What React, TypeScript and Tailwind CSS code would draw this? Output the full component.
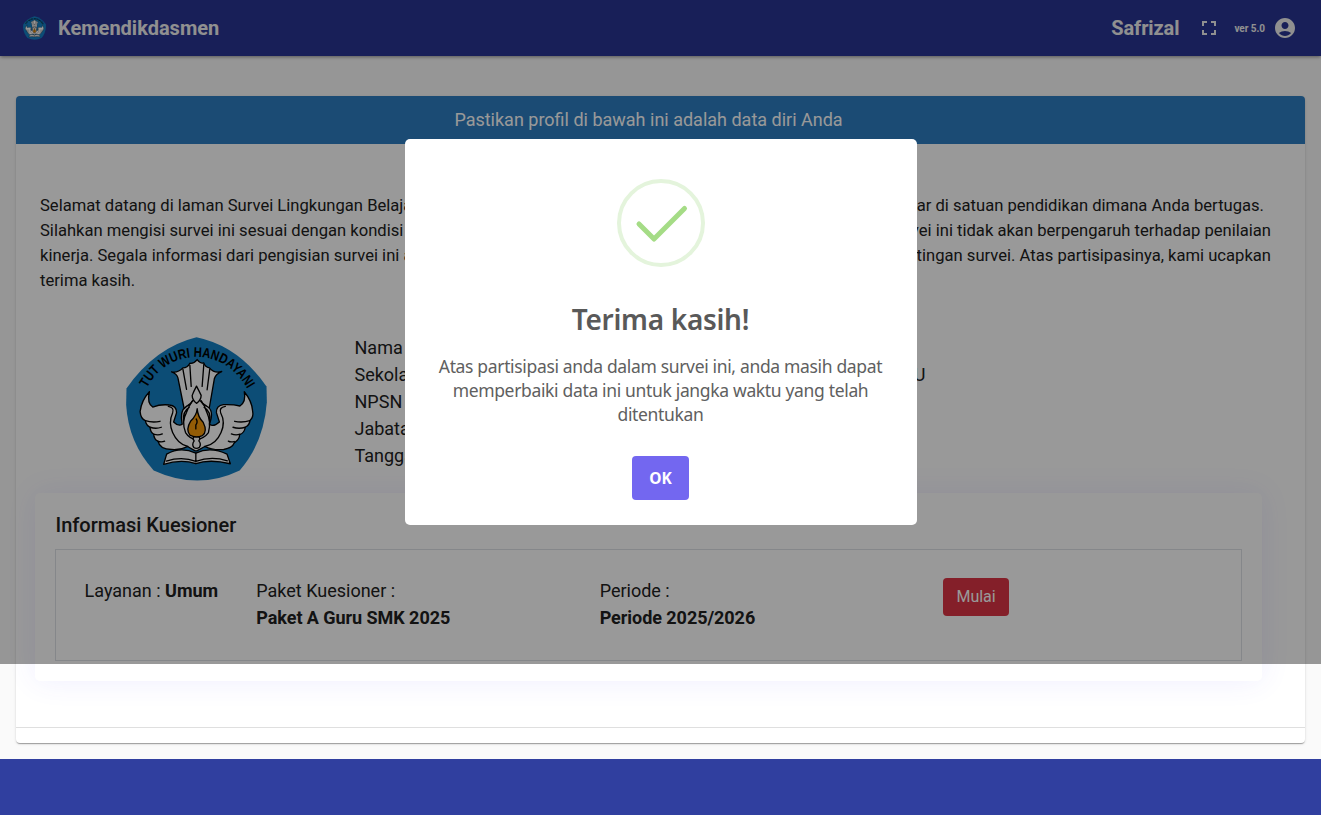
import React from "react";
import { MdAccountCircle, MdFullscreen } from "react-icons/md";

const ink = { stroke: "#000", strokeWidth: 4, strokeLinejoin: "round", strokeLinecap: "round" } as const;

function Emblem({ className, arcId }: { className: string; arcId: string }) {
  return (
    <svg className={className} viewBox="46 35 426 434" aria-hidden="true">
      <path
        d="M259 36 Q385 62 470 184 L471 232 Q462 354 389 437 Q263 498 130 437 Q54 354 47 240 L48 190 Q135 66 259 36Z"
        fill="#1580c5"
      />
      <path id={arcId} d="M109 189 Q160 98 259 95 Q362 98 416 198" fill="none" />
      <text fontFamily="Liberation Sans, Arial, sans-serif" fontSize="42" fontWeight="700" fill="#000">
        <textPath href={`#${arcId}`} textLength="376" lengthAdjust="spacingAndGlyphs">
          TUT WURI HANDAYANI
        </textPath>
      </text>
      <g fill="#fff" {...ink}>
        <path d="M222 252 L203 158 Q200 146 184 140 Q203 144 218 128 Q232 128 239 114 Q251 116 261 103 Q271 116 281 113 Q285 126 298 128 Q313 146 335 139 Q317 146 313 160 L297 252 Q276 228 259 235 Q242 228 222 252Z" />
        <path d="M218 132 L229 193 M239 120 L243 184 M281 118 L276 184 M299 132 L291 194" fill="none" />
        <path d="M117 200 Q93 226 89 260 Q91 282 105 287 Q107 301 119 307 Q120 322 130 328 Q131 344 143 349 Q148 374 184 374 Q211 376 232 365 L255 378 L260 378 L284 365 Q308 377 341 374 Q367 370 373 354 Q389 344 389 329 Q403 325 406 307 Q419 300 420 287 Q432 277 428 257 Q426 228 403 200 Q409 231 390 243 Q371 238 340 239 Q318 242 319 263 L328 291 Q309 308 298 297 Q314 256 289 243 Q277 238 272 229 Q260 216 246 229 Q241 239 229 244 Q207 257 216 298 Q205 306 190 291 L199 263 Q199 242 177 240 Q151 237 127 246 Q109 235 117 200Z" />
        <path d="M105 287 Q126 294 149 289 M119 307 Q137 313 153 307 M130 328 Q144 332 156 327 M143 350 Q155 353 163 349 M420 287 Q397 294 374 289 M406 307 Q387 313 369 307 M390 328 Q377 332 364 327 M373 350 Q362 353 355 349 M174 244 Q193 247 187 264 Q174 292 187 323 Q203 359 233 365 M346 244 Q326 247 332 264 Q347 292 333 323 Q318 359 284 365" fill="none" />
        <path d="M259 183 Q268 200 273 211 Q273 224 259 235 Q246 224 246 211 Q250 200 259 183Z" />
        <path d="M247 227 Q235 245 229 262 Q213 290 226 323 Q237 341 259 344 Q282 341 295 323 Q304 292 290 262 Q284 242 273 227 M237 247 Q216 259 220 292 M282 247 Q304 259 299 292" fill="none" />
        <path d="M169 388 Q211 364 257 385 Q301 364 351 388 L361 417 Q298 402 257 417 Q213 402 160 419Z" />
        <path d="M257 385 V411 M168 409 Q216 394 257 410 Q303 393 352 408" fill="none" />
        <path d="M251 336 Q246 341 252 348 Q244 359 251 368 Q259 374 268 367 Q274 357 266 348 Q272 340 266 336Z" />
      </g>
      <path d="M261 251 Q263 276 279 292 Q293 320 277 332 Q257 340 239 331 Q226 313 241 289 Q260 270 261 251Z" fill="#f59a0a" {...ink} />
      <path d="M258 282 Q264 292 257 300 V312" fill="none" {...ink} />
    </svg>
  );
}

const profile: [string, string][] = [
  ["Nama", ""],
  ["Sekolah", "U"],
  ["NPSN", ""],
  ["Jabatan", ""],
  ["Tanggal", ""],
];

function Header() {
  return (
    <header className="relative flex h-14 items-center justify-between bg-[#283593] pr-6 pl-[23px] text-[#f0f0f0] shadow-[0_2px_4px_-1px_rgba(0,0,0,0.2),0_1px_3px_rgba(0,0,0,0.24)]">
      <div className="flex items-center">
        <Emblem className="h-6 w-[23px]" arcId="arc-small" />
        <span className="ml-3 text-[20px] font-bold">Kemendikdasmen</span>
      </div>
      <div className="flex items-center">
        <span className="text-[20px] font-bold tracking-[-0.1px]">Safrizal</span>
        <MdFullscreen className="ml-[18px] size-6" />
        <span className="ml-[13px] text-[10px] font-bold tracking-[-0.05px]">ver 5.0</span>
        <MdAccountCircle className="ml-2 size-6" />
      </div>
    </header>
  );
}

function Survey() {
  return (
    <section className="mx-4 mt-10 h-[647px] rounded bg-white shadow-[0_2px_1px_-1px_rgba(0,0,0,0.2),0_1px_1px_rgba(0,0,0,0.14),0_1px_3px_rgba(0,0,0,0.12)]">
      <h1 className="flex h-12 items-center justify-center rounded-t bg-[#2d7dc1] pr-6 pb-0.5 text-[18px] text-white">
        Pastikan profil di bawah ini adalah data diri Anda
      </h1>
      <div className="h-[584px] border-b border-[#dfdfdf] pt-[49px]">
        <div className="ml-6 text-[16.6px] leading-[25px]">
          <p className="flex w-[1224px] justify-between"><span>Selamat datang di laman Survei Lingkungan Belajar</span><span>ar di satuan pendidikan dimana Anda bertugas.</span></p>
          <p className="flex w-[1231px] justify-between"><span>Silahkan mengisi survei ini sesuai dengan kondisi</span><span>survei ini tidak akan berpengaruh terhadap penilaian</span></p>
          <p className="flex w-[1231px] justify-between"><span>kinerja. Segala informasi dari pengisian survei ini akan</span><span>kepentingan survei. Atas partisipasinya, kami ucapkan</span></p>
          <p>terima kasih.</p>
        </div>
        <div className="mt-[41px] flex h-[159px] text-[18px] leading-[27px]">
          <Emblem className="mt-[3px] ml-[109px] h-[144px] w-[143px]" arcId="arc-large" />
          <dl className="ml-[86.5px]">
            {profile.map(([label, value]) => (
              <div key={label} className="flex w-[571px] justify-between">
                <dt>{label}</dt>
                <dd>{value}</dd>
              </div>
            ))}
          </dl>
        </div>
        <div className="ml-[19px] h-[188px] w-[1227px] rounded-[5px] bg-white px-5 pt-5 shadow-[0_0_30px_rgba(82,63,255,0.09)]">
          <h2 className="pl-[0.5px] text-[20px] leading-6 font-medium">Informasi Kuesioner</h2>
          <div className="mt-3 grid h-28 grid-cols-[171.7px_343.4px_343.4px_auto] border border-[#dee2e6] pt-[27px] pl-[28.6px] text-[18px] leading-[27px]">
            <p>Layanan : <b className="tracking-[-0.08px]">Umum</b></p>
            <p>Paket Kuesioner :<br /><b className="tracking-[-0.05px]">Paket A Guru SMK 2025</b></p>
            <p>Periode :<br /><b className="tracking-[-0.05px]">Periode 2025/2026</b></p>
            <button className="mt-px h-[38px] w-[66px] rounded bg-[#dc3545] pb-0.5 text-[16px] text-white">Mulai</button>
          </div>
        </div>
      </div>
    </section>
  );
}

function ThanksDialog() {
  return (
    <div className="absolute inset-x-0 top-0 flex h-[664px] items-center justify-center bg-black/40">
      <div role="dialog" className="flex h-[386px] w-[512px] flex-col items-center rounded-[5px] bg-white pt-10 font-['Noto_Sans',sans-serif]">
        <svg className="size-[88px]" viewBox="0 0 88 88" fill="none">
          <circle cx="44" cy="44" r="42" stroke="#e4f4dc" strokeWidth="4" />
          <path d="M22 45 L37 60 L67.5 29.5" stroke="#a5dc86" strokeWidth="5" strokeLinecap="round" strokeLinejoin="round" />
        </svg>
        <h2 className="mt-8 text-[28px] leading-10 font-semibold tracking-[-0.3px] whitespace-nowrap text-[#595959]">Terima kasih!</h2>
        <p className="mt-[15px] text-center text-[17.5px] leading-6 tracking-[-0.34px] whitespace-nowrap text-[#606060]">
          Atas partisipasi anda dalam survei ini, anda masih dapat<br />
          memperbaiki data ini untuk jangka waktu yang telah<br />
          ditentukan
        </p>
        <button className="mt-[30px] h-11 w-[57px] rounded bg-[#7367f0] pt-px text-[15.5px] font-bold text-white">OK</button>
      </div>
    </div>
  );
}

export default function App() {
  return (
    <div className="relative flex h-[815px] w-full flex-col overflow-hidden bg-[#fafafa] font-['Roboto',sans-serif] text-[#212121]">
      <Header />
      <main className="grow"><Survey /></main>
      <footer className="h-14 bg-[#303f9f]" />
      <ThanksDialog />
    </div>
  );
}
